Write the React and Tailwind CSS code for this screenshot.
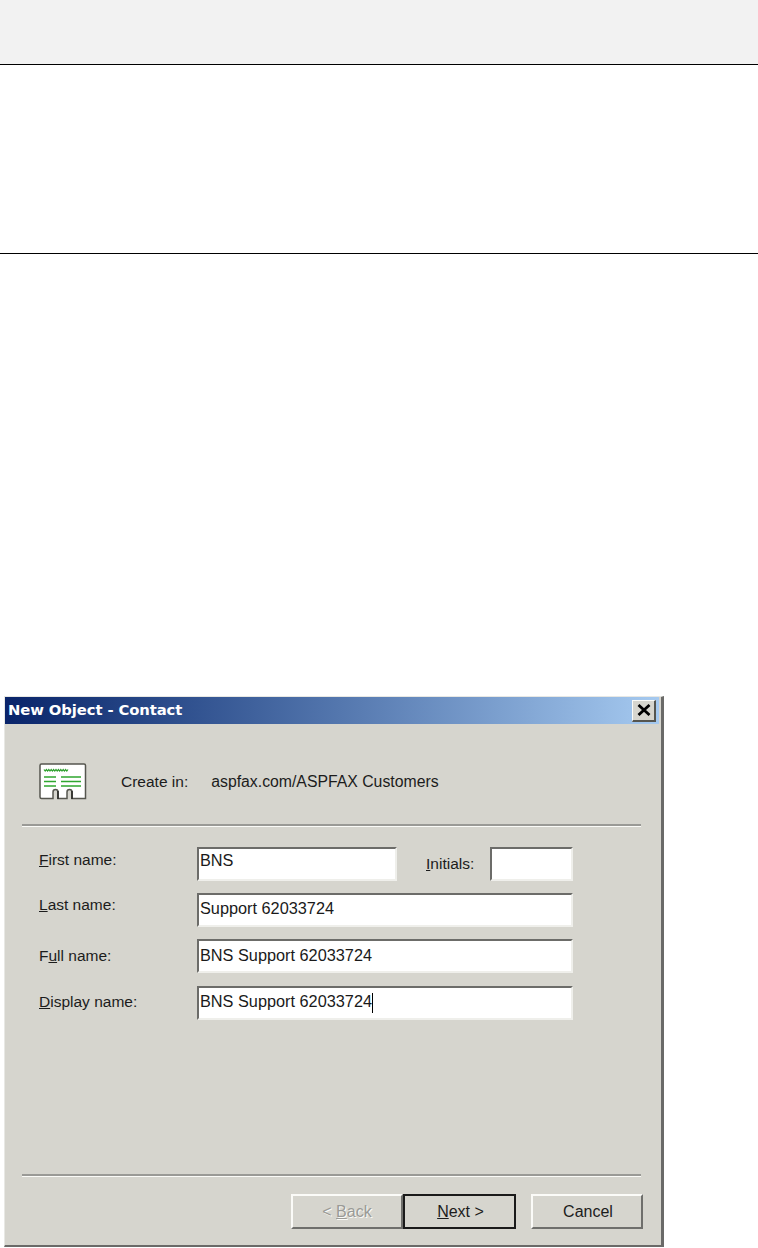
import React from 'react';

const fields = [
  { before: '', key: 'F', after: 'irst name:', value: 'BNS', textClass: 'pb-[7px]', labelClass: 'pb-[8px]' },
  { before: '', key: 'L', after: 'ast name:', value: 'Support 62033724', textClass: 'pb-[4px]', labelClass: 'pb-[10px]' },
  { before: 'F', key: 'u', after: 'll name:', value: 'BNS Support 62033724', textClass: 'pb-[2px]', labelClass: '' },
  { before: '', key: 'D', after: 'isplay name:', value: 'BNS Support 62033724', textClass: 'pb-[4px]', labelClass: 'pb-[2px]', rowClass: 'mt-px', caret: true },
];

const ContactIcon = () => (
  <svg width="48" height="37" viewBox="0 0 48 37" className="block">
    <path d="M2.5 1H45a1.5 1.5 0 0 1 1.5 1.5V35.5H33V29a2.5 2.5 0 0 0-5 0v6.5H19V29a2.5 2.5 0 0 0-5 0v6.5H2.5A1.5 1.5 0 0 1 1 34V2.5A1.5 1.5 0 0 1 2.5 1Z" fill="#fff" stroke="#56564f" strokeWidth="1.5" />
    <path d="M5 6.5l1.2 1.5 1.2-1.5 1.2 1.5 1.2-1.5 1.2 1.5 1.2-1.5 1.2 1.5 1.2-1.5 1.2 1.5 1.2-1.5 1.2 1.5 1.2-1.5 1.2 1.5 1.2-1.5 1.2 1.5 1.2-1.5 1.2 1.5 1.2-1.5 1.2 1.5 1.2-1.5" fill="none" stroke="#2c9f2c" strokeWidth="1.2" />
    <path d="M5 14h12M22 14h20M5 18.5h12M22 18.5h20M5 23h12M22 23h20" stroke="#2fa62f" strokeWidth="1.7" />
    <path d="M19 28v8M33 28v8" stroke="#2b2b29" strokeWidth="1.6" />
  </svg>
);

const Separator = () => (
  <div className="h-[3px] border-t-[2px] border-b border-t-[#9a9a96] border-b-[#fbfbf8]" />
);

const Input = ({ className, children }) => (
  <div className={`h-[34px] flex items-center pl-px bg-white border-2 border-t-[#6c6c69] border-l-[#6c6c69] border-r-[#efefeb] border-b-[#efefeb] text-[16.3px] text-[#1a1a1a] ${className}`}>
    {children}
  </div>
);

const Button = ({ children, className }) => (
  <div className={`h-[35px] flex items-center justify-center text-[16px] border-2 border-t-[#fbfbf8] border-l-[#fbfbf8] border-r-[#6f6f6c] border-b-[#6f6f6c] ${className}`}>
    {children}
  </div>
);

export default function App() {
  return (
    <div className="w-[758px] h-[1248px] bg-white overflow-hidden font-['Liberation_Sans',sans-serif]">
      {/* Page header band and rules */}
      <div className="h-[65px] bg-[#f2f2f2] border-b border-black" />
      <div className="h-[189px] border-b border-black" />

      {/* Dialog window */}
      <div className="mt-[442px] ml-[4px] w-[660px] h-[551px] bg-[#d6d5ce] border-t border-l border-t-[#e8e8e4] border-l-[#e8e8e4] border-r-[3px] border-r-[#6a6a68] border-b-[2px] border-b-[#6a6a68] flex flex-col text-[#1c1c1c]">
        {/* Title bar */}
        <div className="h-[27px] mr-[2px] flex items-center justify-between pl-[3px] pr-[3px] bg-gradient-to-r from-[#0a246a] to-[#a6caf0]">
          <span className="text-white font-bold text-[14.8px] font-['DejaVu_Sans',sans-serif] tracking-[-0.1px]">New Object - Contact</span>
          <div className="w-[24px] h-[22px] flex items-center justify-center bg-[#d6d5ce] border border-r-2 border-b-2 border-t-[#fbfbf8] border-l-[#fbfbf8] border-r-[#55554f] border-b-[#55554f]">
            <svg width="14" height="12" viewBox="0 0 14 12">
              <path d="M1.5 1l11 10M12.5 1l-11 10" stroke="#000" strokeWidth="2.8" />
            </svg>
          </div>
        </div>

        {/* Create in */}
        <div className="h-[100px] flex items-center pl-[34px] pt-[15px]">
          <ContactIcon />
          <span className="ml-[34px] text-[15.5px]">Create in:</span>
          <span className="ml-[23px] text-[15.8px]">aspfax.com/ASPFAX Customers</span>
        </div>
        <div className="mx-[17px] w-[619px]"><Separator /></div>

        {/* Name fields */}
        <div className="mt-[20px] ml-[34px] flex flex-col gap-[12px] h-[327px]">
          {fields.map((f) => (
            <div key={f.key} className={`flex items-center text-[15.5px] ${f.rowClass || ''}`}>
              <span className={`w-[158px] ${f.labelClass}`}>
                {f.before}<span className="underline">{f.key}</span>{f.after}
              </span>
              {f.key === 'F' ? (
                <>
                  <Input className="w-[200px]"><span className={f.textClass}>{f.value}</span></Input>
                  <span className="ml-[29px] w-[64px]"><span className="underline">I</span>nitials:</span>
                  <Input className="w-[83px]" />
                </>
              ) : (
                <Input className="w-[376px]">
                  <span className={f.textClass}>{f.value}</span>
                  {f.caret && <span className="w-px h-[20px] bg-black" />}
                </Input>
              )}
            </div>
          ))}
        </div>

        <div className="mx-[17px] w-[619px]"><Separator /></div>

        {/* Wizard buttons */}
        <div className="mt-[17px] ml-[286px] flex">
          <Button className="w-[112px] text-[#9a9a96] [text-shadow:1px_1px_0_#fbfbf8]">&lt;&nbsp;<span className="underline">B</span>ack</Button>
          <Button className="w-[113px] pl-[2px] ring-2 ring-inset ring-[#1a1a1a] border-none">
            <span className="underline">N</span>ext &gt;
          </Button>
          <Button className="w-[112px] ml-[15px] pl-[2px]">Cancel</Button>
        </div>
      </div>
    </div>
  );
}
